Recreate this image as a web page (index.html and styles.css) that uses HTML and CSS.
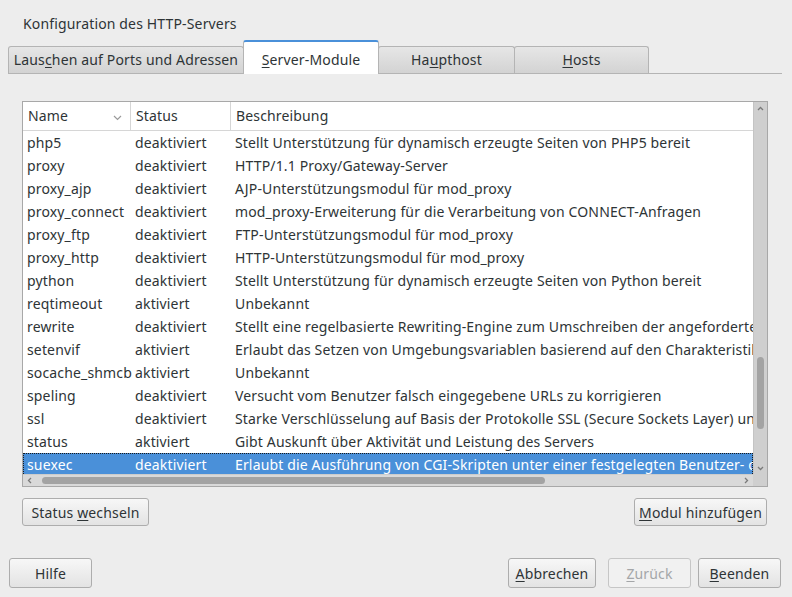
FILE: index.html
```html
<!DOCTYPE html>
<html lang="de">
<head>
<meta charset="utf-8">
<title>Konfiguration des HTTP-Servers</title>
<link rel="stylesheet" href="styles.css">
</head>
<body>
<div class="title">Konfiguration des HTTP-Servers</div>
<div class="tabs">
  <div class="tab t1">Laus<u>c</u>hen auf Ports und Adressen</div>
  <div class="tab active t2"><u>S</u>erver-Module</div>
  <div class="tab t3">Ha<u>u</u>pthost</div>
  <div class="tab t4"><u>H</u>osts</div>
</div>
<div class="tv">
  <div class="view">
    <div class="row head">
      <div class="c1">Name<span class="chev"><svg width="9" height="6" viewBox="0 0 9 6"><path d="M1 1 L4.5 4.5 L8 1" fill="none" stroke="#9a9a9a" stroke-width="1.2"/></svg></span></div>
      <div class="c2">Status</div>
      <div class="c3">Beschreibung</div>
    </div>
    <div class="row"><div class="c1">php5</div><div class="c2">deaktiviert</div><div class="c3">Stellt Unterstützung für dynamisch erzeugte Seiten von PHP5 bereit</div></div>
    <div class="row"><div class="c1">proxy</div><div class="c2">deaktiviert</div><div class="c3">HTTP/1.1 Proxy/Gateway-Server</div></div>
    <div class="row"><div class="c1">proxy_ajp</div><div class="c2">deaktiviert</div><div class="c3">AJP-Unterstützungsmodul für mod_proxy</div></div>
    <div class="row"><div class="c1">proxy_connect</div><div class="c2">deaktiviert</div><div class="c3">mod_proxy-Erweiterung für die Verarbeitung von CONNECT-Anfragen</div></div>
    <div class="row"><div class="c1">proxy_ftp</div><div class="c2">deaktiviert</div><div class="c3">FTP-Unterstützungsmodul für mod_proxy</div></div>
    <div class="row"><div class="c1">proxy_http</div><div class="c2">deaktiviert</div><div class="c3">HTTP-Unterstützungsmodul für mod_proxy</div></div>
    <div class="row"><div class="c1">python</div><div class="c2">deaktiviert</div><div class="c3">Stellt Unterstützung für dynamisch erzeugte Seiten von Python bereit</div></div>
    <div class="row"><div class="c1">reqtimeout</div><div class="c2">aktiviert</div><div class="c3">Unbekannt</div></div>
    <div class="row"><div class="c1">rewrite</div><div class="c2">deaktiviert</div><div class="c3">Stellt eine regelbasierte Rewriting-Engine zum Umschreiben der angeforderten URLs bereit</div></div>
    <div class="row"><div class="c1">setenvif</div><div class="c2">aktiviert</div><div class="c3">Erlaubt das Setzen von Umgebungsvariablen basierend auf den Charakteristiken der Anfrage</div></div>
    <div class="row"><div class="c1">socache_shmcb</div><div class="c2">aktiviert</div><div class="c3">Unbekannt</div></div>
    <div class="row"><div class="c1">speling</div><div class="c2">deaktiviert</div><div class="c3">Versucht vom Benutzer falsch eingegebene URLs zu korrigieren</div></div>
    <div class="row"><div class="c1">ssl</div><div class="c2">deaktiviert</div><div class="c3">Starke Verschlüsselung auf Basis der Protokolle SSL (Secure Sockets Layer) und TLS</div></div>
    <div class="row"><div class="c1">status</div><div class="c2">aktiviert</div><div class="c3">Gibt Auskunft über Aktivität und Leistung des Servers</div></div>
    <div class="row sel"><div class="c1">suexec</div><div class="c2">deaktiviert</div><div class="c3">Erlaubt die Ausführung von CGI-Skripten unter einer festgelegten Benutzer- oder Gruppen-ID</div></div>
  </div>
  <div class="vscroll">
    <svg class="arr" width="7" height="5" viewBox="0 0 7 5"><path d="M1 4 L3.5 1.5 L6 4" fill="none" stroke="#7a7a7a" stroke-width="1.3"/></svg>
    <div class="vtrack"><div class="vthumb"></div></div>
    <svg class="arr" width="7" height="5" viewBox="0 0 7 5"><path d="M1 1 L3.5 3.5 L6 1" fill="none" stroke="#7a7a7a" stroke-width="1.3"/></svg>
  </div>
  <div class="hscroll">
    <svg class="arr" width="5" height="7" viewBox="0 0 5 7"><path d="M4 1 L1.5 3.5 L4 6" fill="none" stroke="#7a7a7a" stroke-width="1.3"/></svg>
    <div class="htrack"><div class="hthumb"></div></div>
    <svg class="arr" width="5" height="7" viewBox="0 0 5 7"><path d="M1 1 L3.5 3.5 L1 6" fill="none" stroke="#7a7a7a" stroke-width="1.3"/></svg>
  </div>
  <div class="corner"></div>
</div>
<div class="actions">
  <button class="btn b-status">Status <u>w</u>echseln</button>
  <button class="btn b-add"><u>M</u>odul hinzufügen</button>
</div>
<div class="footer">
  <button class="btn b-help">Hilfe</button>
  <div class="spacer"></div>
  <button class="btn b-cancel"><u>A</u>bbrechen</button>
  <button class="btn b-back" disabled><u>Z</u>urück</button>
  <button class="btn b-finish"><u>B</u>eenden</button>
</div>
</body>
</html>
```
FILE: styles.css
```css
* { box-sizing: border-box; }
html, body { margin: 0; padding: 0; }
body {
  width: 792px;
  height: 597px;
  background: #ededed;
  font-family: "Noto Sans", "DejaVu Sans", sans-serif;
  font-size: 14px;
  letter-spacing: 0.15px;
  color: #2e3436;
  overflow: hidden;
}
u { text-decoration: underline; text-underline-offset: 2px; }

.title {
  padding: 15px 0 0 23px;
  height: 40px;
  line-height: 18px;
}

.tabs {
  display: flex;
  align-items: flex-end;
  margin: 0 10px 0 8px;
  height: 34px;
  border-bottom: 1px solid #b4b4b4;
}
.tab {
  height: 27px;
  line-height: 26px;
  text-align: center;
  background: linear-gradient(#e6e6e6, #d3d3d3);
  border: 1px solid #b4b4b4;
  border-bottom: none;
  border-radius: 3px 3px 0 0;
  white-space: nowrap;
}
.tab + .tab { margin-left: -1px; }
.t1 { width: 236px; }
.t2 { width: 136px; }
.t3 { width: 137px; }
.t4 { width: 135px; }
.tab.active {
  height: 34px;
  line-height: 36px;
  background: #ffffff;
  border-top: 2px solid #4a90d9;
  margin-bottom: -1px;
  position: relative;
  z-index: 1;
}

.tv {
  margin: 27px 24px 0 22px;
  height: 386px;
  background: #ffffff;
  border: 1px solid #a8a8a8;
  display: grid;
  grid-template-columns: 1fr 14px;
  grid-template-rows: 1fr 12px;
}
.view {
  overflow: hidden;
  min-width: 0;
}
.row {
  display: flex;
  height: 23px;
  line-height: 23px;
  white-space: nowrap;
}
.row > div { padding-left: 4px; flex: none; }
.c1 { width: 108px; }
.c2 { width: 100px; }
.c3 { width: 760px; }
.row.head {
  height: 29px;
  line-height: 28px;
  border-bottom: 1px solid #d6d6d6;
}
.row.head > div { padding-left: 5px; }
.row.head .c1, .row.head .c2 { border-right: 1px solid #d6d6d6; }
.row.head .c1 { position: relative; }
.chev { position: absolute; left: 90px; top: 0; }
.row.sel {
  background: #4a90d9;
  color: #ffffff;
  outline: 1px dotted #1a1a1a;
  outline-offset: -1px;
}

.vscroll {
  background: #cfcfcf;
  border-left: 1px solid #c4c4c4;
  display: flex;
  flex-direction: column;
  align-items: center;
  padding: 4px 0 3px;
}
.vscroll .arr { flex: none; }
.vtrack { flex: 1; width: 100%; position: relative; }
.vthumb {
  position: absolute;
  left: 3px;
  width: 7px;
  top: 246px;
  height: 72px;
  border-radius: 4px;
  background: #a3a3a3;
}
.hscroll {
  background: #d9d9d9;
  border-top: 1px solid #cccccc;
  display: flex;
  align-items: center;
  padding: 0 4px 0 4px;
}
.htrack { flex: 1; height: 100%; position: relative; }
.hthumb {
  position: absolute;
  left: 10px;
  width: 503px;
  top: 2px;
  height: 7px;
  border-radius: 4px;
  background: #a3a3a3;
}
.corner { background: #cfcfcf; }

.btn {
  font-family: inherit;
  font-size: 14px;
  letter-spacing: 0.15px;
  color: #2e3436;
  background: linear-gradient(#f7f7f7, #e3e3e3);
  border: 1px solid #adadad;
  border-radius: 3px;
  padding: 0 4px;
  white-space: nowrap;
}
.btn:disabled {
  color: #a4a6a8;
  background: #f1f1f1;
  border-color: #c6c6c6;
}
.actions {
  display: flex;
  justify-content: space-between;
  margin: 11px 25px 0 22px;
}
.actions .btn { height: 28px; }
.b-status { width: 127px; }
.b-add { width: 133px; }

.footer {
  display: flex;
  margin: 32px 11px 0 9px;
}
.footer .btn { height: 30px; }
.spacer { flex: 1; }
.b-help { width: 83px; }
.b-cancel { width: 88px; }
.b-back { width: 83px; margin-left: 12px; }
.b-finish { width: 83px; margin-left: 7px; }
```
